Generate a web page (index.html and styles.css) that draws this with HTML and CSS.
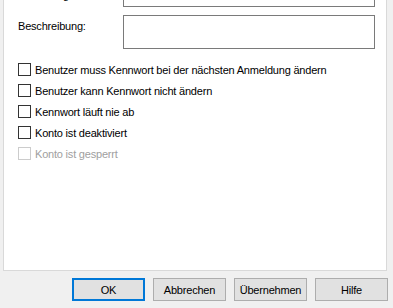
FILE: index.html
```html
<!DOCTYPE html>
<html lang="de">
<head>
    <meta charset="UTF-8">
    <meta name="viewport" content="width=device-width, initial-scale=1.0">
    <link rel="stylesheet" href="styles.css">
</head>
<body>
    <div class="dialog">
        <div class="tab-panel">
            <!-- top of the page is scrolled away, only the bottom of this row shows -->
            <div class="field-row cut">
                <label class="field-label">Vollständiger Name:</label>
                <div class="text-box"></div>
            </div>
            <div class="field-row">
                <label class="field-label">Beschreibung:</label>
                <div class="text-box tall"></div>
            </div>

            <div class="options">
                <label class="check"><input type="checkbox"> Benutzer muss Kennwort bei der nächsten Anmeldung ändern</label>
                <label class="check"><input type="checkbox"> Benutzer kann Kennwort nicht ändern</label>
                <label class="check"><input type="checkbox"> Kennwort läuft nie ab</label>
                <label class="check"><input type="checkbox"> Konto ist deaktiviert</label>
                <label class="check disabled"><input type="checkbox" disabled> Konto ist gesperrt</label>
            </div>
        </div>

        <div class="button-row">
            <button class="dlg-button default">OK</button>
            <button class="dlg-button">Abbrechen</button>
            <button class="dlg-button">Übernehmen</button>
            <button class="dlg-button">Hilfe</button>
        </div>
    </div>
</body>
</html>
```

FILE: styles.css
```css
/* Base */
:root {
    --dialog-bg: #f0f0f0;
    --panel-border: #d9d9d9;
    --box-border: #7a7a7a;
    --button-bg: #e1e1e1;
    --button-border: #adadad;
    --accent: #0078d7;
    --disabled-text: #a0a0a0;
}

* {
    box-sizing: border-box;
}

body {
    margin: 0;
    background-color: var(--dialog-bg);
    font-family: 'Liberation Sans', Arial, sans-serif;
    font-size: 11px;
    letter-spacing: -0.2px;
    color: #000;
}

.dialog {
    width: 393px;
    height: 308px;
    overflow: hidden;
}

/* Tab page */
.tab-panel {
    margin-left: 3px;
    width: 384px;
    height: 271px;
    padding: 0 11px 0 14px;
    background-color: #fff;
    border: 1px solid var(--panel-border);
    border-top: none;
}

.field-row {
    display: flex;
    align-items: flex-start;
    margin-bottom: 8px;
}

.field-row.cut {
    height: 7px;
    overflow: hidden;
    align-items: flex-end;
}

.field-row.cut .field-label {
    margin-bottom: 4px;
}

.field-label {
    width: 105px;
    flex-shrink: 0;
    padding-top: 4px;
    line-height: 15px;
    white-space: nowrap;
}

.text-box {
    width: 252px;
    height: 23px;
    flex-shrink: 0;
    border: 1px solid var(--box-border);
    background-color: #fff;
}

.text-box.tall {
    height: 34px;
}

/* Checkboxes */
.options {
    margin-top: 10px;
    display: flex;
    flex-direction: column;
}

.check {
    display: flex;
    align-items: center;
    height: 21px;
    white-space: nowrap;
}

.check input {
    appearance: none;
    -webkit-appearance: none;
    margin: 0 4px 0 0;
    width: 13px;
    height: 13px;
    border: 1px solid #333;
    background-color: #fff;
    flex-shrink: 0;
}

.check.disabled {
    color: var(--disabled-text);
}

.check.disabled input {
    border-color: #ccc;
}

/* Buttons */
.button-row {
    display: flex;
    justify-content: flex-end;
    gap: 8px;
    margin-top: 7px;
    padding-right: 5px;
}

.dlg-button {
    width: 73px;
    height: 23px;
    padding: 0;
    font-family: inherit;
    font-size: 11px;
    letter-spacing: -0.2px;
    color: #000;
    background-color: var(--button-bg);
    border: 1px solid var(--button-border);
    border-radius: 0;
}

.dlg-button.default {
    border: 2px solid var(--accent);
}
```
